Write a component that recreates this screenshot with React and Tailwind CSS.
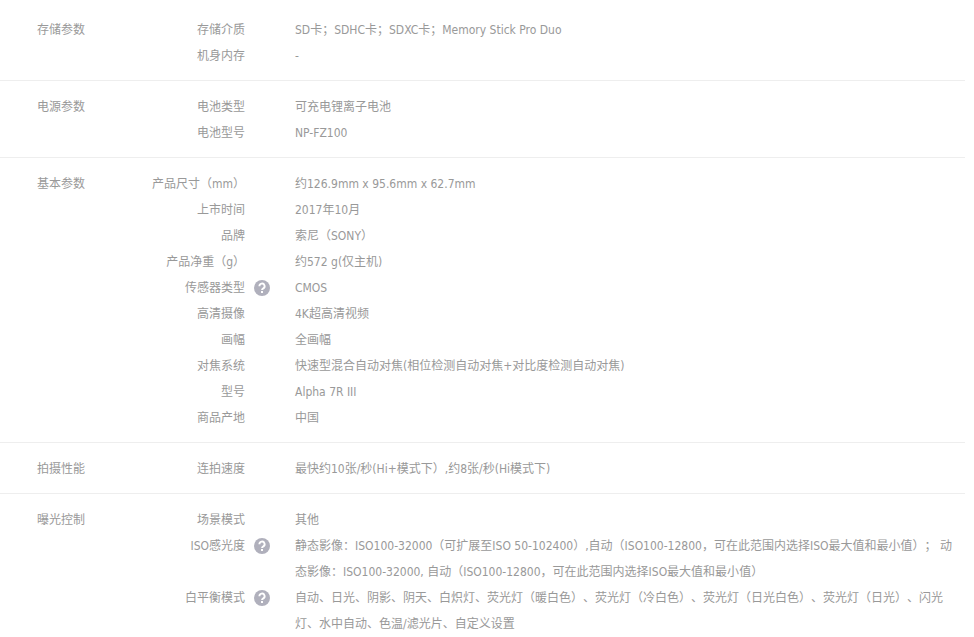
const sections = [
  {
    title: "存储参数",
    rows: [
      { label: "存储介质", value: "SD卡；SDHC卡；SDXC卡；Memory Stick Pro Duo" },
      { label: "机身内存", value: "-" },
    ],
  },
  {
    title: "电源参数",
    rows: [
      { label: "电池类型", value: "可充电锂离子电池" },
      { label: "电池型号", value: "NP-FZ100" },
    ],
  },
  {
    title: "基本参数",
    rows: [
      { label: "产品尺寸（mm）", value: "约126.9mm x 95.6mm x 62.7mm" },
      { label: "上市时间", value: "2017年10月" },
      { label: "品牌", value: "索尼（SONY）" },
      { label: "产品净重（g）", value: "约572 g(仅主机)" },
      { label: "传感器类型", value: "CMOS", hint: true },
      { label: "高清摄像", value: "4K超高清视频" },
      { label: "画幅", value: "全画幅" },
      { label: "对焦系统", value: "快速型混合自动对焦(相位检测自动对焦+对比度检测自动对焦)" },
      { label: "型号", value: "Alpha 7R III" },
      { label: "商品产地", value: "中国" },
    ],
  },
  {
    title: "拍摄性能",
    rows: [{ label: "连拍速度", value: "最快约10张/秒(Hi+模式下）,约8张/秒(Hi模式下)" }],
  },
  {
    title: "曝光控制",
    rows: [
      { label: "场景模式", value: "其他" },
      {
        label: "ISO感光度",
        hint: true,
        value:
          "静态影像：ISO100-32000（可扩展至ISO 50-102400）,自动（ISO100-12800，可在此范围内选择ISO最大值和最小值）； 动态影像：ISO100-32000, 自动（ISO100-12800，可在此范围内选择ISO最大值和最小值）",
      },
      {
        label: "白平衡模式",
        hint: true,
        value:
          "自动、日光、阴影、阴天、白炽灯、荧光灯（暖白色）、荧光灯（冷白色）、荧光灯（日光白色）、荧光灯（日光）、闪光灯、水中自动、色温/滤光片、自定义设置",
      },
    ],
  },
];

function HintIcon() {
  return (
    <svg width="16" height="16" viewBox="0 0 16 16" className="shrink-0">
      <circle cx="8" cy="8" r="8" fill="#b0b0bc" />
      <path d="M5.4 6.2a2.6 2.6 0 1 1 3.9 2.2c-.9.5-1.3.9-1.3 1.7" fill="none" stroke="#fff" strokeWidth="1.9" />
      <rect x="7" y="11" width="2" height="2" fill="#fff" />
    </svg>
  );
}

function Row({ row }) {
  return (
    <div className="flex">
      <div className="w-[116px] shrink-0 flex justify-end text-right">{row.label}</div>
      <div className="w-[50px] shrink-0 h-[26px] flex items-center pl-[9px]">{row.hint && <HintIcon />}</div>
      <div className="flex-1">{row.value}</div>
    </div>
  );
}

export default function App() {
  return (
    <div
      className="h-[637px] overflow-hidden bg-white pt-1 text-xs leading-[26px] text-[#999] [text-spacing-trim:space-all]"
      style={{ fontFamily: '"DejaVu Sans Condensed", "Noto Sans CJK SC", sans-serif' }}
    >
      <div className="w-[965px]">
        {sections.map((section) => (
          <div key={section.title} className="flex border-b border-[#eee] pl-[37px] pt-[13px] pb-[11px] pr-[5px]">
            <div className="w-[92px] shrink-0">{section.title}</div>
            <div className="flex-1 min-w-0">
              {section.rows.map((row) => (
                <Row key={row.label} row={row} />
              ))}
            </div>
          </div>
        ))}
      </div>
    </div>
  );
}
